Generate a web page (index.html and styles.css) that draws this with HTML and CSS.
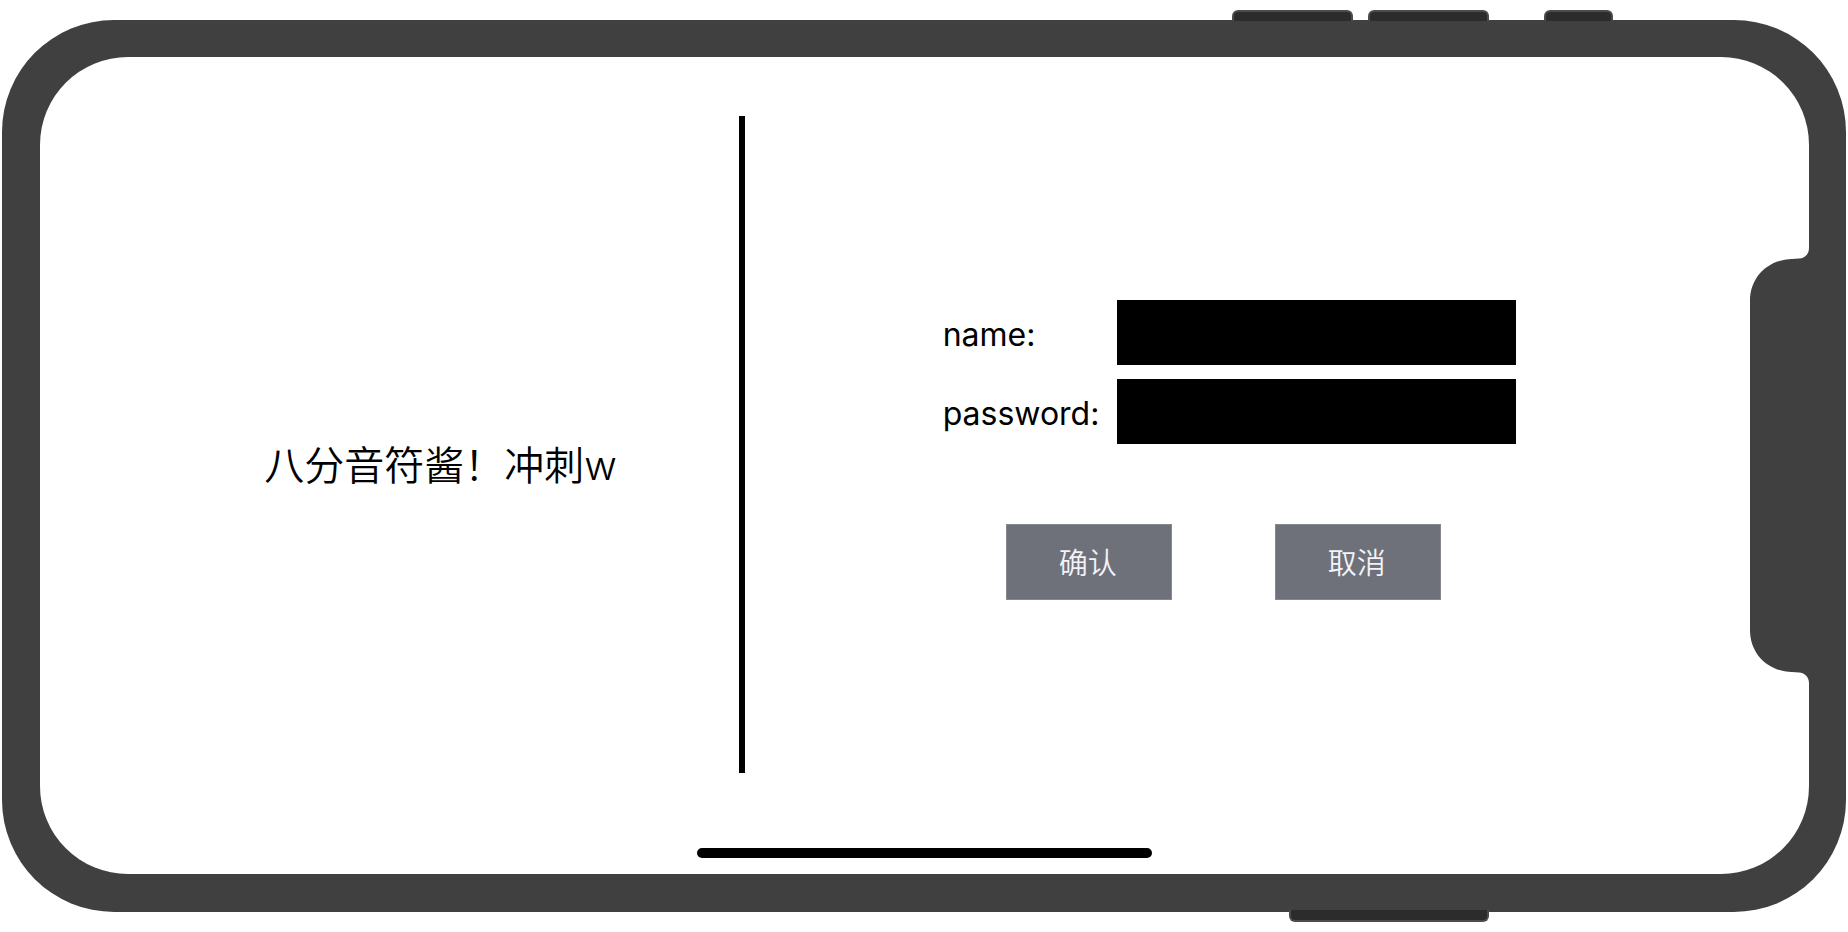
FILE: index.html
```html
<!DOCTYPE html>
<html lang="zh-CN">
<head>
<meta charset="utf-8">
<meta name="viewport" content="width=device-width, initial-scale=1">
<title>八分音符酱！冲刺w</title>
<link rel="stylesheet" href="styles.css">
</head>
<body>
<div class="rail rail-top">
  <span class="key key-volume"></span>
  <span class="key key-volume"></span>
  <span class="key key-mute"></span>
</div>
<div class="device">
  <main class="screen">
    <section class="intro">
      <h1 class="title">八分音符酱！冲刺w</h1>
    </section>
    <div class="divider"></div>
    <form class="login">
      <div class="fields">
        <label class="label" for="name">name:</label>
        <input class="input" id="name" type="text">
        <label class="label" for="password">password:</label>
        <input class="input" id="password" type="password">
      </div>
      <div class="actions">
        <button class="button" type="button">确认</button>
        <button class="button" type="button">取消</button>
      </div>
    </form>
    <div class="notch">
      <svg width="59" height="435" viewBox="0 0 59 435" aria-hidden="true">
        <path fill="#404040" d="M59 0C59 6 55 10.300 49 10.600L42 11C18 11.500 0 29 0 53V382C0 406 18 423.500 42 424L49 424.400C55 424.700 59 429 59 435Z"/>
      </svg>
    </div>
    <div class="home-bar"></div>
  </main>
</div>
<div class="rail rail-bottom">
  <span class="key key-power"></span>
</div>
</body>
</html>
```
FILE: styles.css
```css
* {
  box-sizing: border-box;
}

body {
  margin: 0;
  min-height: 100vh;
  padding: 10px 2px;
  display: flex;
  flex-direction: column;
  background: #fff;
  color: #000;
  font-family: Inter, "Noto Sans CJK SC", sans-serif;
}

/* Hardware keys on the long edges of the phone */
.rail {
  position: relative;
  display: flex;
  justify-content: flex-end;
}

.rail-top {
  padding-right: 233px;
  margin-bottom: -1px;
}

.rail-bottom {
  padding-right: 357px;
  margin-top: -2px;
}

.key {
  height: 11px;
  background: #2c2c2c;
  border: 2px solid #4c4c4c;
}

.rail-top .key {
  border-bottom: 0;
  border-radius: 6px 6px 0 0;
}

.key-volume {
  width: 121px;
  margin-right: 15px;
}

.key-volume + .key-mute {
  margin-left: 40px;
}

.key-mute {
  width: 69px;
}

.key-power {
  width: 200px;
  height: 12px;
  border-top: 0;
  border-radius: 0 0 6px 6px;
}

.device {
  flex: 1;
  display: flex;
  padding: 37px 37px 38px 38px;
  border-radius: 112px;
  background: #404040;
}

.screen {
  position: relative;
  flex: 1;
  display: grid;
  grid-template-columns: 5fr 6px 8fr;
  padding: 0 108px 0 102px;
  border-radius: 88px;
  background: #fff;
}

.intro {
  display: flex;
  align-items: center;
  justify-content: center;
}

.title {
  margin: 0;
  font-size: 40px;
  font-weight: 350;
  line-height: 60px;
}

.divider {
  margin: 59px 0 101px;
  background: #000;
}

.login {
  display: flex;
  flex-direction: column;
  align-items: center;
  justify-content: center;
  gap: 80px;
  padding-bottom: 32px;
}

.fields {
  display: grid;
  grid-template-columns: 174px 399px;
  row-gap: 14px;
  align-items: center;
  margin-left: 12px;
}

.label {
  font-size: 32px;
  line-height: 40px;
  padding-top: 6px;
}

.input {
  width: 100%;
  height: 65px;
  padding: 0 16px;
  border: 0;
  border-radius: 0;
  background: #000;
  color: #fff;
  font: inherit;
  font-size: 32px;
}

.actions {
  display: flex;
  gap: 103px;
}

.button {
  width: 166px;
  height: 76px;
  padding: 0 2px 2px 0;
  border: 1px solid #85888f;
  background: #6e7179;
  color: #f2f2f7;
  font-family: inherit;
  font-size: 29px;
  font-weight: 350;
}

.notch {
  position: absolute;
  top: 0;
  right: 0;
  bottom: 0;
  display: flex;
  align-items: center;
  pointer-events: none;
}

.home-bar {
  position: absolute;
  right: 0;
  bottom: 16px;
  left: 0;
  width: 455px;
  height: 10px;
  margin: 0 auto;
  border-radius: 5px;
  background: #000;
}
```
